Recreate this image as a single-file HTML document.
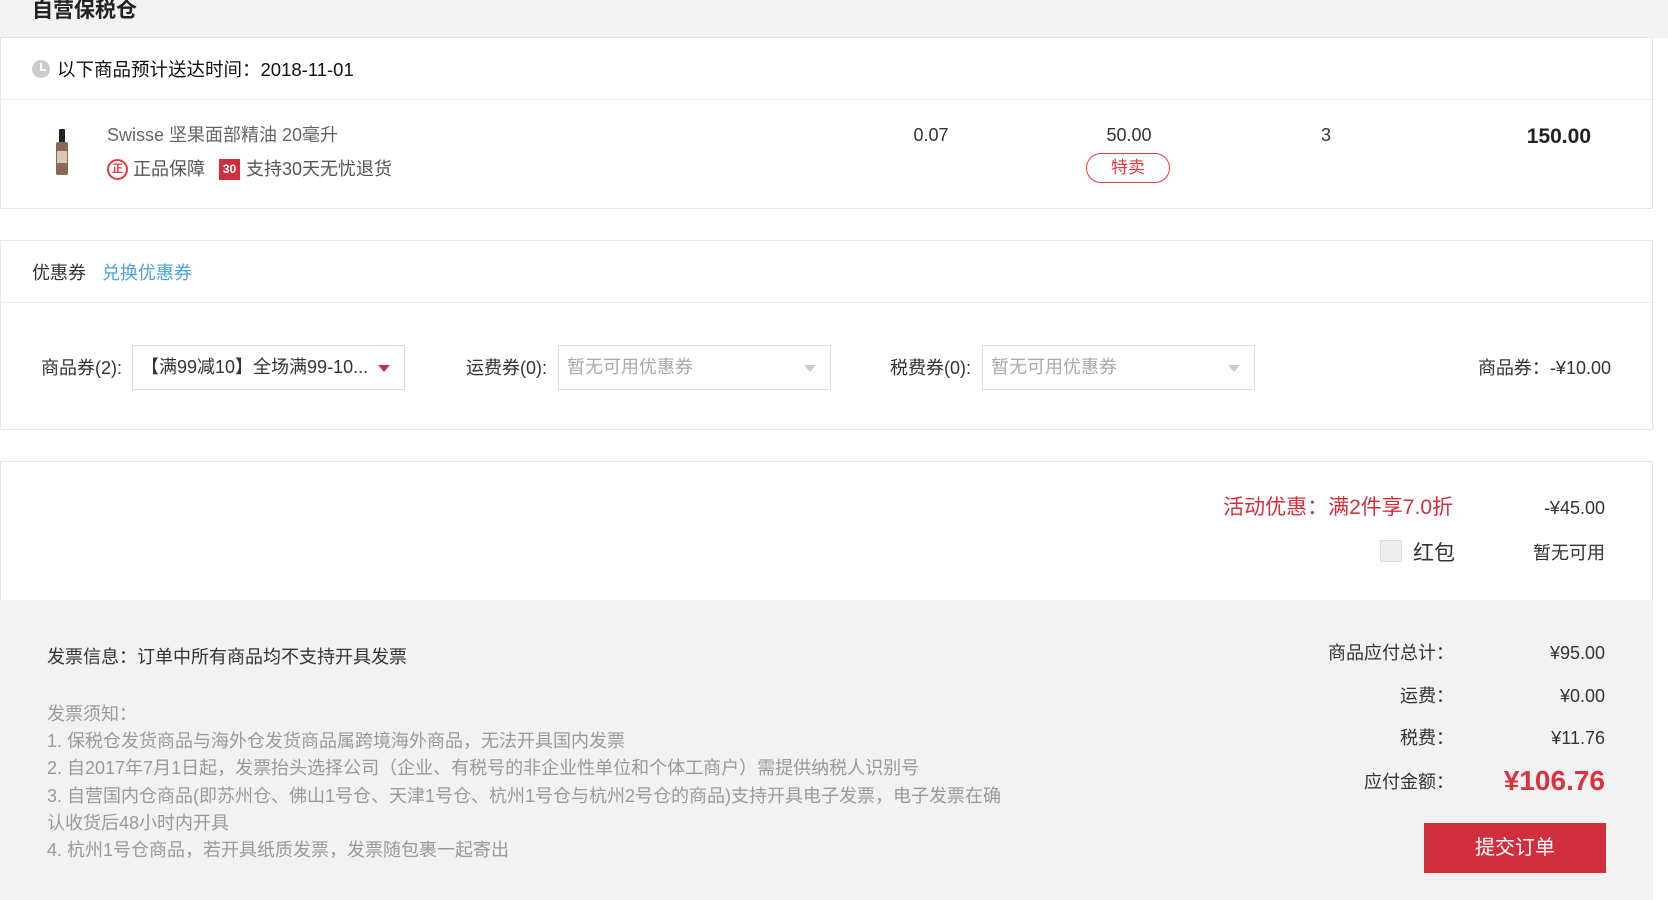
<!DOCTYPE html>
<html><head><meta charset="utf-8"><style>
*{margin:0;padding:0;box-sizing:border-box}
body{width:1668px;height:855px;overflow:hidden;background:#fff;font-family:"Liberation Sans","Noto Sans CJK SC",sans-serif;color:#333;position:relative}
.a{position:absolute;white-space:nowrap}
.box{position:absolute;left:0;width:1653px;border:1px solid #e6e6e6;background:#fff}
.sel{position:absolute;height:45px;border:1px solid #ddd;background:#fff;font-size:18px;line-height:43px;padding-left:8px;color:#aaa}
.sel i{position:absolute;right:14px;top:19px;width:0;height:0;border-left:6px solid transparent;border-right:6px solid transparent;border-top:7px solid #ccc}
.r{text-align:right}
</style></head><body>
<div class="a" style="left:0;top:0;width:1668px;height:38px;background:#f2f2f2"></div>
<div class="a" style="left:32px;top:-2px;font-size:21px;line-height:26px;color:#222;font-weight:bold">自营保税仓</div>

<div class="box" style="top:37px;height:172px"></div>
<div class="a" style="left:1px;top:99px;width:1651px;height:1px;background:#ececec"></div>
<div class="a" style="left:32px;top:60px;width:18px;height:18px;border-radius:50%;background:#ccc"></div>
<div class="a" style="left:40px;top:63px;width:2px;height:7px;background:#fff"></div>
<div class="a" style="left:40px;top:69px;width:6px;height:2px;background:#fff"></div>
<div class="a" style="left:57px;top:58px;font-size:18.5px;line-height:24px;color:#111">以下商品预计送达时间：2018-11-01</div>

<div class="a" style="left:59px;top:129px;width:6px;height:14px;background:#222;border-radius:1px"></div>
<div class="a" style="left:56px;top:142px;width:12px;height:33px;background:#8a6a55;border-radius:2px"></div>
<div class="a" style="left:57px;top:151px;width:10px;height:12px;background:#d9c8b8"></div>
<div class="a" style="left:107px;top:123px;font-size:18px;line-height:24px;color:#666">Swisse 坚果面部精油 20毫升</div>
<div class="a" style="left:107px;top:159px;width:21px;height:21px;border-radius:50%;border:2px solid #e4393c;color:#e4393c;font-size:11px;line-height:17px;text-align:center;font-weight:bold">正</div>
<div class="a" style="left:133px;top:157px;font-size:18px;line-height:24px;color:#555">正品保障</div>
<div class="a" style="left:219px;top:159px;width:21px;height:21px;background:#d0303d;color:#fff;font-size:12px;line-height:21px;text-align:center;font-weight:bold">30</div>
<div class="a" style="left:246px;top:157px;font-size:18px;line-height:24px;color:#555">支持30天无忧退货</div>
<div class="a" style="left:906px;top:125px;width:50px;text-align:center;font-size:18px;color:#333">0.07</div>
<div class="a" style="left:1094px;top:125px;width:70px;text-align:center;font-size:18px;color:#333">50.00</div>
<div class="a" style="left:1086px;top:153px;width:84px;height:30px;border:1.5px solid #e4393c;border-radius:15px;color:#e4393c;font-size:17px;line-height:27px;text-align:center">特卖</div>
<div class="a" style="left:1316px;top:125px;width:20px;text-align:center;font-size:18px">3</div>
<div class="a r" style="left:1460px;top:125px;width:131px;font-size:21px;font-weight:bold;color:#222">150.00</div>

<div class="box" style="top:240px;height:190px"></div>
<div class="a" style="left:1px;top:302px;width:1651px;height:1px;background:#ececec"></div>
<div class="a" style="left:32px;top:261px;font-size:18px;line-height:24px;color:#333">优惠券</div>
<div class="a" style="left:102px;top:261px;font-size:18px;line-height:24px;color:#4aa3df">兑换优惠券</div>

<div class="a" style="left:41px;top:356px;font-size:18px;line-height:24px">商品券(2):</div>
<div class="sel" style="left:132px;top:345px;width:273px;color:#333">【满99减10】全场满99-10...<i style="border-top-color:#d0303d"></i></div>
<div class="a" style="left:466px;top:356px;font-size:18px;line-height:24px">运费券(0):</div>
<div class="sel" style="left:558px;top:345px;width:273px">暂无可用优惠券<i></i></div>
<div class="a" style="left:890px;top:356px;font-size:18px;line-height:24px">税费券(0):</div>
<div class="sel" style="left:982px;top:345px;width:273px">暂无可用优惠券<i></i></div>
<div class="a r" style="left:1380px;top:356px;width:231px;font-size:18px;line-height:24px">商品券：-¥10.00</div>

<div class="box" style="top:461px;height:140px"></div>
<div class="a r" style="left:1100px;top:495px;width:353px;font-size:21px;line-height:26px;color:#d0303d">活动优惠：满2件享7.0折</div>
<div class="a r" style="left:1480px;top:496px;width:125px;font-size:18px;line-height:24px">-¥45.00</div>
<div class="a" style="left:1380px;top:540px;width:22px;height:22px;background:#eee;border:1px solid #ddd"></div>
<div class="a" style="left:1413px;top:541px;font-size:21px;line-height:26px">红包</div>
<div class="a r" style="left:1480px;top:541px;width:125px;font-size:18px;line-height:24px">暂无可用</div>

<div class="a" style="left:0;top:600px;width:1653px;height:300px;background:#f2f2f2"></div>
<div class="a" style="left:47px;top:645px;font-size:18px;line-height:24px;color:#333">发票信息：订单中所有商品均不支持开具发票</div>
<div class="a" style="left:47px;top:701px;font-size:18px;line-height:27.2px;color:#999">发票须知：<br>1. 保税仓发货商品与海外仓发货商品属跨境海外商品，无法开具国内发票<br>2. 自2017年7月1日起，发票抬头选择公司（企业、有税号的非企业性单位和个体工商户）需提供纳税人识别号<br>3. 自营国内仓商品(即苏州仓、佛山1号仓、天津1号仓、杭州1号仓与杭州2号仓的商品)支持开具电子发票，电子发票在确<br>认收货后48小时内开具<br>4. 杭州1号仓商品，若开具纸质发票，发票随包裹一起寄出</div>

<div class="a r" style="left:1240px;top:641px;width:214px;font-size:18px;line-height:24px">商品应付总计：</div>
<div class="a r" style="left:1480px;top:641px;width:125px;font-size:18px;line-height:24px">¥95.00</div>
<div class="a r" style="left:1240px;top:684px;width:214px;font-size:18px;line-height:24px">运费：</div>
<div class="a r" style="left:1480px;top:684px;width:125px;font-size:18px;line-height:24px">¥0.00</div>
<div class="a r" style="left:1240px;top:726px;width:214px;font-size:18px;line-height:24px">税费：</div>
<div class="a r" style="left:1480px;top:726px;width:125px;font-size:18px;line-height:24px">¥11.76</div>
<div class="a r" style="left:1240px;top:770px;width:214px;font-size:18px;line-height:24px">应付金额：</div>
<div class="a r" style="left:1420px;top:764px;width:185px;font-size:28px;line-height:34px;font-weight:bold;color:#d9333f">¥106.76</div>
<div class="a" style="left:1424px;top:823px;width:182px;height:50px;background:#d0303d;color:#fff;font-size:20px;line-height:50px;text-align:center">提交订单</div>
</body></html>
